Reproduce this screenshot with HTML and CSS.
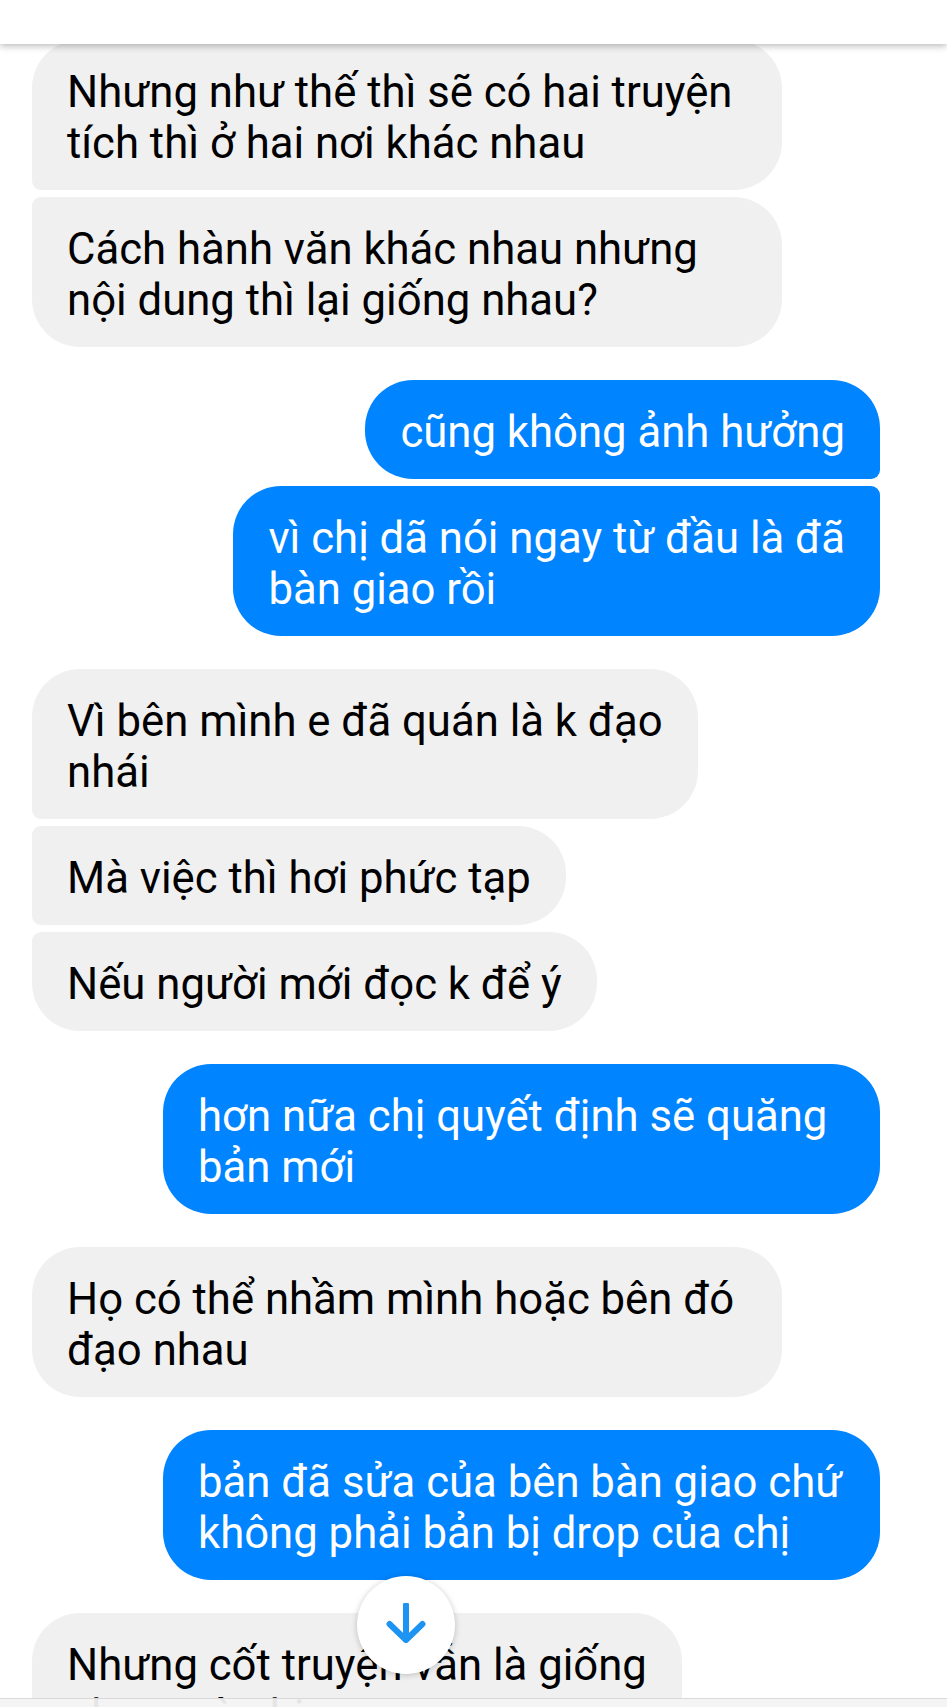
FILE: index.html
```html
<!DOCTYPE html>
<html lang="vi">
<head>
<meta charset="utf-8">
<title>Chat</title>
<link rel="stylesheet" href="styles.css">
</head>
<body>
<div class="screen">
  <header class="topbar"></header>
  <main class="chat">
    <div class="thread">
      <div class="group in">
        <div class="bubble full first">Nhưng như thế thì sẽ có hai truyện<br>tích thì ở hai nơi khác nhau</div>
        <div class="bubble full last">Cách hành văn khác nhau nhưng<br>nội dung thì lại giống nhau?</div>
      </div>
      <div class="group out">
        <div class="bubble first">cũng không ảnh hưởng</div>
        <div class="bubble last">vì chị dã nói ngay từ đầu là đã<br>bàn giao rồi</div>
      </div>
      <div class="group in">
        <div class="bubble first">Vì bên mình e đã quán là k đạo<br>nhái</div>
        <div class="bubble mid">Mà việc thì hơi phức tạp</div>
        <div class="bubble last">Nếu người mới đọc k để ý</div>
      </div>
      <div class="group out">
        <div class="bubble full solo">hơn nữa chị quyết định sẽ quăng<br>bản mới</div>
      </div>
      <div class="group in">
        <div class="bubble full solo">Họ có thể nhầm mình hoặc bên đó<br>đạo nhau</div>
      </div>
      <div class="group out">
        <div class="bubble full solo">bản đã sửa của bên bàn giao chứ<br>không phải bản bị drop của chị</div>
      </div>
      <div class="group in">
        <div class="bubble first">Nhưng cốt truyện vẫn là giống<br>nhau mà chị</div>
      </div>
    </div>
    <button class="scroll-down" aria-label="Cuộn xuống">
      <svg viewBox="0 0 40 40" width="40" height="40">
        <path d="M20 2 V37 M3.5 21 L20 37 L36.5 21" fill="none" stroke="#1e94f2" stroke-width="6" stroke-linecap="round" stroke-linejoin="round"/>
      </svg>
    </button>
    <div class="composer-edge"></div>
  </main>
</div>
</body>
</html>
```

FILE: styles.css
```css
* { box-sizing: border-box; }

html, body {
  margin: 0;
  padding: 0;
  background: #ffffff;
}

.screen {
  width: 947px;
  height: 1707px;
  overflow: hidden;
  position: relative;
  display: flex;
  flex-direction: column;
  font-family: Roboto, "Noto Sans", "Liberation Sans", sans-serif;
}

.topbar {
  height: 44px;
  flex: 0 0 44px;
  background: #ffffff;
  position: relative;
  z-index: 3;
  box-shadow: 0 2px 7px rgba(0, 0, 0, 0.28);
}

.chat {
  flex: 1 1 auto;
  position: relative;
  overflow: hidden;
}

.thread {
  margin-top: -4px;
  padding: 0 67px 0 32px;
  display: flex;
  flex-direction: column;
  gap: 33px;
}

.group {
  display: flex;
  flex-direction: column;
  gap: 7px;
}

.group.in { align-items: flex-start; }
.group.out { align-items: flex-end; }

.bubble {
  font-size: 43.7px;
  line-height: 51px;
  padding: 27px 35px 21px;
  border-radius: 48px;
  white-space: nowrap;
}

.in .bubble {
  background: #f0f0f0;
  color: #000000;
}

.out .bubble {
  background: #0084ff;
  color: #ffffff;
}

.in .full { width: 750px; }
.out .full { width: 717px; }

.in .first { border-bottom-left-radius: 9px; }
.in .mid { border-top-left-radius: 9px; border-bottom-left-radius: 9px; }
.in .last { border-top-left-radius: 9px; }

.out .first { border-bottom-right-radius: 9px; }
.out .mid { border-top-right-radius: 9px; border-bottom-right-radius: 9px; }
.out .last { border-top-right-radius: 9px; }

.scroll-down {
  position: absolute;
  left: 357px;
  bottom: 33px;
  width: 98px;
  height: 98px;
  border: none;
  border-radius: 50%;
  background: #ffffff;
  box-shadow: 0 1px 6px rgba(0, 0, 0, 0.22);
  display: flex;
  align-items: center;
  justify-content: center;
  padding: 0;
}

.scroll-down svg {
  display: block;
  margin-top: -4px;
}

.composer-edge {
  position: absolute;
  left: 0;
  right: 0;
  bottom: 0;
  height: 9px;
  background: rgba(243, 243, 243, 0.94);
  border-top: 1px solid #d9d9d9;
}
```
